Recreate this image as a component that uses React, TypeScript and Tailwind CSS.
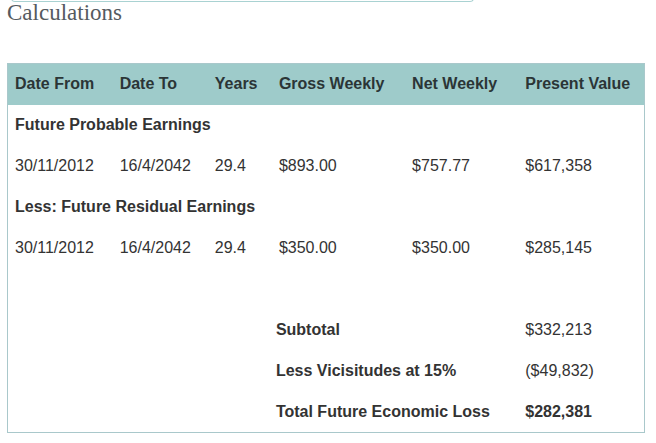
const rows = [
  { type: "section", label: "Future Probable Earnings" },
  {
    type: "data",
    cells: ["30/11/2012", "16/4/2042", "29.4", "$893.00", "$757.77", "$617,358"],
  },
  { type: "section", label: "Less: Future Residual Earnings" },
  {
    type: "data",
    cells: ["30/11/2012", "16/4/2042", "29.4", "$350.00", "$350.00", "$285,145"],
  },
];

const totals = [
  { label: "Subtotal", value: "$332,213", bold: false },
  { label: "Less Vicisitudes at 15%", value: "($49,832)", bold: false },
  { label: "Total Future Economic Loss", value: "$282,381", bold: true },
];

const headers = ["Date From", "Date To", "Years", "Gross Weekly", "Net Weekly", "Present Value"];

export default function App() {
  return (
    <div className="min-h-screen bg-white px-[7px] font-['Liberation_Sans',Arial,sans-serif] text-[#333]">
      {/* bottom edge of the box above */}
      <div className="-mt-[2px] ml-[4px] h-[4px] w-[463px] rounded-b-[5px] border-x border-b border-[#a9d2d2]" />

      <h2 className="mt-[-1px] font-['Liberation_Serif','DejaVu_Serif',serif] text-[23px] leading-[24px] text-[#555a60]">
        Calculations
      </h2>

      <table className="mt-[38px] w-[638px] table-fixed border-collapse border border-[#a9c8cb] text-[16px]">
        <colgroup>
          <col className="w-[105px]" />
          <col className="w-[95px]" />
          <col className="w-[64px]" />
          <col className="w-[133px]" />
          <col className="w-[113px]" />
          <col className="w-[126px]" />
        </colgroup>
        <thead>
          <tr className="h-[41px] bg-[#9ecbca]">
            {headers.map((h) => (
              <th key={h} className="pl-[7px] text-left font-bold text-[#2b3536] whitespace-nowrap">
                {h}
              </th>
            ))}
          </tr>
        </thead>
        <tbody>
          {rows.map((row, i) =>
            row.type === "section" ? (
              <tr key={i} className="h-[41px]">
                <td colSpan={6} className="pl-[7px] font-bold">
                  {row.label}
                </td>
              </tr>
            ) : (
              <tr key={i} className="h-[41px]">
                {row.cells!.map((c, j) => (
                  <td key={j} className="pl-[7px] whitespace-nowrap">
                    {c}
                  </td>
                ))}
              </tr>
            )
          )}
          <tr className="h-[41px]">
            <td colSpan={6} />
          </tr>
          {totals.map((t) => (
            <tr key={t.label} className="h-[41px]">
              <td colSpan={3} />
              <td colSpan={2} className="pl-[4px] font-bold whitespace-nowrap">
                {t.label}
              </td>
              <td className={`pl-[7px] whitespace-nowrap ${t.bold ? "font-bold" : ""}`}>{t.value}</td>
            </tr>
          ))}
        </tbody>
      </table>
    </div>
  );
}
